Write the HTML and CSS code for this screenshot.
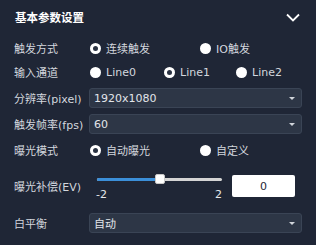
FILE: index.html
```html
<!DOCTYPE html>
<html lang="zh">
<head>
    <meta charset="UTF-8">
    <title>基本参数设置</title>
    <link rel="stylesheet" href="styles.css">
</head>
<body>
    <div class="panel">
        <div class="panel-head">
            <span class="panel-title">基本参数设置</span>
            <svg class="chevron" width="14" height="9" viewBox="0 0 14 9">
                <polyline points="1,1.5 7,7.5 13,1.5" fill="none" stroke="#ffffff" stroke-width="1.8"/>
            </svg>
        </div>

        <div class="row row-radio">
            <span class="label">触发方式</span>
            <div class="radios two">
                <span class="radio checked"><i></i>连续触发</span>
                <span class="radio"><i></i>IO触发</span>
            </div>
        </div>

        <div class="row row-radio">
            <span class="label">输入通道</span>
            <div class="radios three">
                <span class="radio"><i></i>Line0</span>
                <span class="radio checked"><i></i>Line1</span>
                <span class="radio"><i></i>Line2</span>
            </div>
        </div>

        <div class="row row-select">
            <span class="label">分辨率(pixel)</span>
            <div class="select">1920x1080<span class="caret"></span></div>
        </div>

        <div class="row row-select">
            <span class="label">触发帧率(fps)</span>
            <div class="select">60<span class="caret"></span></div>
        </div>

        <div class="row row-select">
            <span class="label">曝光模式</span>
            <div class="radios two">
                <span class="radio checked"><i></i>自动曝光</span>
                <span class="radio"><i></i>自定义</span>
            </div>
        </div>

        <div class="row row-ev">
            <span class="label">曝光补偿(EV)</span>
            <div class="slider">
                <div class="track">
                    <div class="track-fill" style="width: 50%"></div>
                    <div class="thumb" style="left: 50%"></div>
                </div>
                <div class="ticks"><span>-2</span><span>2</span></div>
            </div>
            <div class="ev-input">0</div>
        </div>

        <div class="row row-wb">
            <span class="label">白平衡</span>
            <div class="select">自动<span class="caret"></span></div>
        </div>
    </div>
</body>
</html>
```

FILE: styles.css
```css
body {
    margin: 0;
    background-color: #1f2636;
    font-family: "DejaVu Sans", "Noto Sans CJK SC", sans-serif;
    font-size: 11px;
    color: #d3d7de;
}
.panel {
    width: 316px;
    height: 245px;
    padding: 0 14px;
    box-sizing: border-box;
}
.panel-head {
    height: 34px;
    display: flex;
    align-items: center;
    justify-content: space-between;
    padding-left: 1px;
}
.panel-title {
    font-size: 11.5px;
    font-weight: bold;
    color: #ffffff;
}
.chevron {
    margin-right: 2px;
    margin-top: 1px;
}
.row {
    display: flex;
    align-items: center;
    height: 20px;
    margin-top: 6px;
}
.row-radio {
    margin-top: 4px;
}
.label {
    width: 75px;
    flex: none;
    white-space: nowrap;
}
.radios {
    display: grid;
    width: 220px;
}
.radios.two {
    grid-template-columns: 110px 110px;
}
.radios.three {
    grid-template-columns: 74px 72px 74px;
}
.radio {
    display: flex;
    align-items: center;
    white-space: nowrap;
}
.radio i {
    width: 11px;
    height: 11px;
    border-radius: 50%;
    background-color: #ffffff;
    margin-right: 5px;
    margin-left: 1px;
    display: flex;
    align-items: center;
    justify-content: center;
}
.radio.checked i::after {
    content: "";
    width: 5px;
    height: 5px;
    border-radius: 50%;
    background-color: #2a3242;
}
.select {
    flex: 1;
    height: 20px;
    box-sizing: border-box;
    background-color: #2d3646;
    border: 1px solid #3a4455;
    border-radius: 3px;
    display: flex;
    align-items: center;
    padding-left: 4px;
    position: relative;
    color: #e2e5ea;
}
.caret {
    position: absolute;
    right: 6px;
    top: 8px;
    width: 0;
    height: 0;
    border-left: 3px solid transparent;
    border-right: 3px solid transparent;
    border-top: 3px solid #d0d4da;
}
.row-ev {
    height: 36px;
    margin-top: 8px;
}
.slider {
    width: 125px;
    margin-left: 8px;
    height: 36px;
    display: flex;
    flex-direction: column;
}
.track {
    position: relative;
    margin-top: 10px;
    height: 3px;
    background-color: #d4d4d4;
    border-radius: 2px;
}
.track-fill {
    height: 3px;
    background-color: #3b8fd9;
    border-radius: 2px;
}
.thumb {
    position: absolute;
    top: -4px;
    width: 10px;
    height: 10px;
    margin-left: -5px;
    background-color: #ffffff;
    border: 1px solid #c8c8c8;
    box-sizing: border-box;
    border-radius: 2px;
}
.ticks {
    display: flex;
    justify-content: space-between;
    margin-top: 7px;
    color: #e6e8ec;
}
.ticks span:first-child {
    margin-left: -1px;
}
.ev-input {
    width: 63px;
    height: 22px;
    margin-left: 10px;
    background-color: #ffffff;
    border-radius: 2px;
    color: #1f2636;
    display: flex;
    align-items: center;
    justify-content: center;
}
.row-wb {
    margin-top: 9px;
}
```
